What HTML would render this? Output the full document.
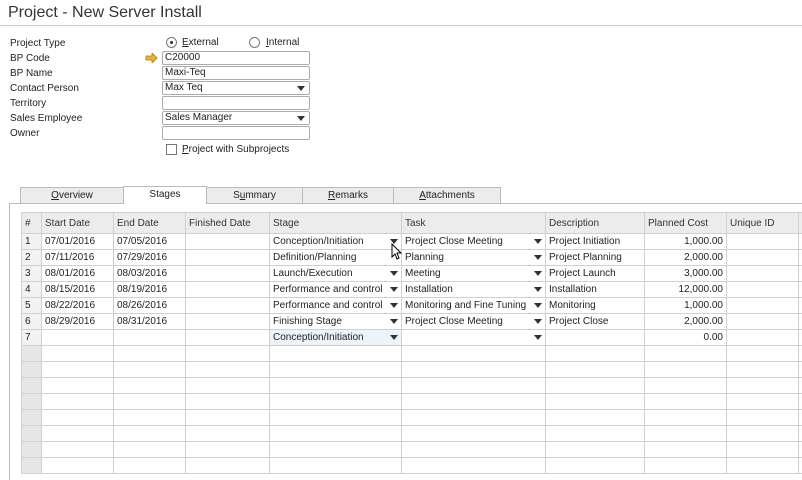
<!DOCTYPE html>
<html><head><meta charset="utf-8"><style>
*{margin:0;padding:0;box-sizing:border-box}
body{width:802px;height:480px;background:#fff;font-family:"Liberation Sans",sans-serif;font-size:10px;color:#222;position:relative;overflow:hidden}
.a{position:absolute}
.lbl{position:absolute;left:10px;font-size:10px}
.fld{position:absolute;left:162px;width:148px;height:14px;border:1px solid #aaa;border-radius:2px;font-size:10px;padding-left:2px;line-height:12px;background:#fff}
.dd:after{content:"";position:absolute;right:4px;top:4px;border-left:4px solid transparent;border-right:4px solid transparent;border-top:5px solid #333}
.tab{position:absolute;top:187px;height:17px;border:1px solid #bbb;background:#ececec;text-align:center;font-size:10px;line-height:15px}
table{position:absolute;left:21px;top:212px;border-collapse:collapse;font-size:10px;table-layout:fixed;width:781px}
td{border:1px solid #d0d0d0;height:16px;padding:0 3px;white-space:nowrap;overflow:hidden;position:relative;line-height:15px}
tr.h td{background:#ececec;height:21px;color:#333}
td.n{background:#f2f2f2}
tr.e td.n{background:#e6e6e6}
.r{text-align:right}
.t:after{content:"";position:absolute;right:3px;top:5px;border-left:4px solid transparent;border-right:4px solid transparent;border-top:5px solid #333}
</style></head><body>
<div class="a" style="left:8px;top:4px;font-size:16px;color:#333">Project - New Server Install</div>
<div class="a" style="left:0;top:25px;width:802px;height:1px;background:#ccc"></div>
<div class="lbl" style="top:38px">Project Type</div>
<div class="lbl" style="top:53px">BP Code</div>
<div class="lbl" style="top:68px">BP Name</div>
<div class="lbl" style="top:83px">Contact Person</div>
<div class="lbl" style="top:98px">Territory</div>
<div class="lbl" style="top:113px">Sales Employee</div>
<div class="lbl" style="top:128px">Owner</div>
<div class="a" style="left:166px;top:37px;width:11px;height:11px;border:1px solid #777;border-radius:50%"><div class="a" style="left:3px;top:3px;width:3px;height:3px;background:#333;border-radius:50%"></div></div>
<div class="a" style="left:182px;top:37px"><u>E</u>xternal</div>
<div class="a" style="left:249px;top:37px;width:11px;height:11px;border:1px solid #777;border-radius:50%"></div>
<div class="a" style="left:266px;top:37px"><u>I</u>nternal</div>
<svg class="a" style="left:145px;top:53px" width="13" height="10"><path d="M1 3h6V0l5 5-5 5V7H1z" fill="#f0b030" stroke="#b07810" stroke-width=".8"/></svg>
<div class="fld" style="top:51px">C20000</div>
<div class="fld" style="top:66px">Maxi-Teq</div>
<div class="fld dd" style="top:81px">Max Teq</div>
<div class="fld" style="top:96px"></div>
<div class="fld dd" style="top:111px">Sales Manager</div>
<div class="fld" style="top:126px"></div>
<div class="a" style="left:166px;top:144px;width:11px;height:11px;border:1px solid #777"></div>
<div class="a" style="left:182px;top:144px"><u>P</u>roject with Subprojects</div>
<div class="a" style="left:9px;top:203px;width:793px;height:1px;background:#bbb"></div>
<div class="a" style="left:9px;top:203px;width:1px;height:277px;background:#bbb"></div>
<div class="tab" style="left:20px;width:104px"><u>O</u>verview</div>
<div class="tab" style="left:123px;width:84px;top:186px;height:18px;background:#fff;border-bottom:none">Stages</div>
<div class="tab" style="left:206px;width:97px">S<u>u</u>mmary</div>
<div class="tab" style="left:302px;width:92px"><u>R</u>emarks</div>
<div class="tab" style="left:393px;width:108px"><u>A</u>ttachments</div>
<table>
<colgroup><col style="width:20px"><col style="width:72px"><col style="width:72px"><col style="width:84px"><col style="width:132px"><col style="width:144px"><col style="width:99px"><col style="width:82px"><col style="width:72px"><col style="width:4px"></colgroup>
<tr class="h"><td class="n" style="background:#ececec">#</td><td>Start Date</td><td>End Date</td><td>Finished Date</td><td>Stage</td><td>Task</td><td>Description</td><td>Planned Cost</td><td>Unique ID</td><td></td></tr>
<tr><td class="n">1</td><td>07/01/2016</td><td>07/05/2016</td><td></td><td class="t">Conception/Initiation</td><td class="t">Project Close Meeting</td><td>Project Initiation</td><td class="r">1,000.00</td><td></td><td></td></tr>
<tr><td class="n">2</td><td>07/11/2016</td><td>07/29/2016</td><td></td><td>Definition/Planning</td><td class="t">Planning</td><td>Project Planning</td><td class="r">2,000.00</td><td></td><td></td></tr>
<tr><td class="n">3</td><td>08/01/2016</td><td>08/03/2016</td><td></td><td class="t">Launch/Execution</td><td class="t">Meeting</td><td>Project Launch</td><td class="r">3,000.00</td><td></td><td></td></tr>
<tr><td class="n">4</td><td>08/15/2016</td><td>08/19/2016</td><td></td><td class="t">Performance and control</td><td class="t">Installation</td><td>Installation</td><td class="r">12,000.00</td><td></td><td></td></tr>
<tr><td class="n">5</td><td>08/22/2016</td><td>08/26/2016</td><td></td><td class="t">Performance and control</td><td class="t">Monitoring and Fine Tuning</td><td>Monitoring</td><td class="r">1,000.00</td><td></td><td></td></tr>
<tr><td class="n">6</td><td>08/29/2016</td><td>08/31/2016</td><td></td><td class="t">Finishing Stage</td><td class="t">Project Close Meeting</td><td>Project Close</td><td class="r">2,000.00</td><td></td><td></td></tr>
<tr><td class="n">7</td><td></td><td></td><td></td><td class="t" style="background:#eef3fa">Conception/Initiation</td><td class="t"></td><td></td><td class="r">0.00</td><td></td><td></td></tr>
<tr class="e"><td class="n"></td><td></td><td></td><td></td><td></td><td></td><td></td><td></td><td></td><td></td></tr>
<tr class="e"><td class="n"></td><td></td><td></td><td></td><td></td><td></td><td></td><td></td><td></td><td></td></tr>
<tr class="e"><td class="n"></td><td></td><td></td><td></td><td></td><td></td><td></td><td></td><td></td><td></td></tr>
<tr class="e"><td class="n"></td><td></td><td></td><td></td><td></td><td></td><td></td><td></td><td></td><td></td></tr>
<tr class="e"><td class="n"></td><td></td><td></td><td></td><td></td><td></td><td></td><td></td><td></td><td></td></tr>
<tr class="e"><td class="n"></td><td></td><td></td><td></td><td></td><td></td><td></td><td></td><td></td><td></td></tr>
<tr class="e"><td class="n"></td><td></td><td></td><td></td><td></td><td></td><td></td><td></td><td></td><td></td></tr>
<tr class="e"><td class="n"></td><td></td><td></td><td></td><td></td><td></td><td></td><td></td><td></td><td></td></tr>
</table>
<svg class="a" style="left:391px;top:243px" width="12" height="18"><path d="M1 1v13l3-3 2 5 2-1-2-5h4z" fill="#fff" stroke="#000" stroke-width="1"/></svg>
</body></html>
